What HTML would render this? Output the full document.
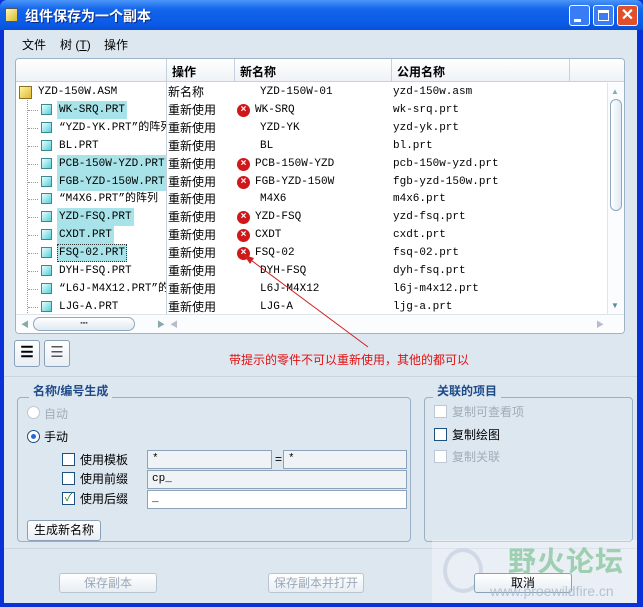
<!DOCTYPE html><html><head><meta charset="utf-8"><style>
*{margin:0;padding:0;box-sizing:border-box}
body{width:643px;height:607px;overflow:hidden;background:#0831d9;font:12px "Liberation Sans","Noto Sans CJK SC",sans-serif;position:relative}
.a{position:absolute}
.mono{font-family:"Liberation Mono","Noto Sans CJK SC",monospace;font-size:11px}
#title{left:0;top:0;width:643px;height:30px;background:linear-gradient(#4a96f8,#1466ec 30%,#0a5ae6 80%,#0a50d8);border-radius:7px 7px 0 0}
#body{left:4px;top:30px;width:633px;height:573px;background:#dde7f0}
.row{position:absolute;left:0;height:18px;line-height:18px;width:590px;white-space:nowrap}
.hl{background:#a7e3e8}
.ic{display:inline-block;width:11px;height:11px;background:linear-gradient(135deg,#e8ffff,#58cfd8);border:1px solid #3a8a90;vertical-align:-1px}
.x{position:absolute;left:221px;top:3px;width:13px;height:13px;border-radius:50%;background:#d0171a;color:#fff;font-size:10px;line-height:13px;text-align:center;font-weight:bold}
.btn{position:absolute;border:1px solid #8aa0b8;border-radius:3px;background:linear-gradient(#fff,#e8eef4);text-align:center;line-height:18px}
.dis{color:#9aa8b8;border-color:#b8c4d0}
.cb{position:absolute;width:13px;height:13px;border:1px solid #1c5180;background:#fff}
.inp{position:absolute;height:19px;border:1px solid #8ca3bb;background:#f0f3f6;line-height:17px;padding-left:4px;font-family:"Liberation Mono",monospace;font-size:11px}
</style></head><body>
<div id="title" class="a"></div>
<div class="a" style="left:5px;top:8px;width:13px;height:14px;background:linear-gradient(135deg,#fff8b0,#d8b830);border:1px solid #555"></div>
<div class="a" style="left:25px;top:6px;color:#fff;font-size:14px;font-weight:bold;text-shadow:1px 1px #0a2a8a">组件保存为一个副本</div>
<div class="a" style="left:569px;top:5px;width:21px;height:21px;border:1px solid #fff;border-radius:3px;background:#3a7cf4"><div class="a" style="left:4px;top:13px;width:7px;height:3px;background:#fff"></div></div>
<div class="a" style="left:593px;top:5px;width:21px;height:21px;border:1px solid #fff;border-radius:3px;background:#3a7cf4"><div class="a" style="left:4px;top:4px;width:11px;height:11px;border:1px solid #fff;border-top:3px solid #fff"></div></div>
<div class="a" style="left:617px;top:5px;width:21px;height:21px;border:1px solid #fff;border-radius:3px;background:#e0502a;color:#fff;font-weight:bold;font-size:16px;text-align:center;line-height:19px">✕</div>
<div id="body" class="a"></div>
<div class="a" style="left:22px;top:36px">文件</div>
<div class="a" style="left:60px;top:36px">树 (<u>T</u>)</div>
<div class="a" style="left:104px;top:36px">操作</div>
<div class="a" style="left:15px;top:58px;width:610px;height:276px;background:#fff;border:1px solid #9eb3c8;border-radius:4px;overflow:hidden">
 <div class="a" style="left:0;top:0;width:610px;height:23px;background:linear-gradient(#fff,#eef2f6);border-bottom:1px solid #c5d2de"></div>
 <div class="a" style="left:150px;top:0;width:1px;height:255px;background:#c5d2de"></div>
 <div class="a" style="left:218px;top:0;width:1px;height:23px;background:#c5d2de"></div>
 <div class="a" style="left:375px;top:0;width:1px;height:23px;background:#c5d2de"></div>
 <div class="a" style="left:553px;top:0;width:1px;height:23px;background:#c5d2de"></div>
 <div class="a" style="left:156px;top:4px;font-weight:bold">操作</div>
 <div class="a" style="left:224px;top:4px;font-weight:bold">新名称</div>
 <div class="a" style="left:381px;top:4px;font-weight:bold">公用名称</div>
 <div class="a" style="left:0;top:24px;width:590px;height:232px">
  <div class="a" style="left:11px;top:12px;width:1px;height:220px;border-left:1px dotted #999"></div>
  <div class="row mono" style="top:0"><span class="a" style="left:3px;top:3px;width:13px;height:13px;background:linear-gradient(135deg,#fff6a0,#e0b830);border:1px solid #8a7020"></span><span class="a" style="left:22px">YZD-150W.ASM</span><span class="a" style="left:152px;font-size:12px;font-family:'Noto Sans CJK SC',sans-serif">新名称</span><span class="a" style="left:244px">YZD-150W-01</span><span class="a" style="left:377px">yzd-150w.asm</span></div>
 </div>
 <div id="rows" class="a" style="left:0;top:24px;width:590px;height:232px"></div>
 <div class="a" style="left:591px;top:24px;width:18px;height:231px;background:#fafcfd;border-left:1px solid #dde4ea"></div>
 <div class="a" style="left:595px;top:28px;color:#8aa;font-size:8px">▲</div>
 <div class="a" style="left:594px;top:40px;width:12px;height:112px;border:1px solid #8fa8be;border-radius:6px;background:linear-gradient(90deg,#fff,#dfe9f2)"></div>
 <div class="a" style="left:595px;top:242px;color:#5a8a9a;font-size:8px">▼</div>
 <div class="a" style="left:0;top:255px;width:610px;height:21px;background:#fafcfd;border-top:1px solid #dde4ea"></div>
 <div class="a" style="left:5px;top:260px;color:#8aa;font-size:8px">◀</div>
 <div class="a" style="left:17px;top:258px;width:102px;height:14px;border:1px solid #8fa8be;border-radius:7px;background:linear-gradient(#fff,#dfe9f2);text-align:center;font-size:7px;line-height:12px;color:#556">▪▪▪</div>
 <div class="a" style="left:141px;top:260px;color:#8aa;font-size:8px">▶</div>
 <div class="a" style="left:154px;top:260px;color:#bbc;font-size:8px">◀</div>
 <div class="a" style="left:580px;top:260px;color:#bbc;font-size:8px">▶</div>
</div>
<div class="btn" style="left:14px;top:340px;width:26px;height:27px;line-height:24px;font-size:15px;font-weight:bold">☰</div>
<div class="btn" style="left:44px;top:340px;width:26px;height:27px;line-height:24px;font-size:15px;color:#555">☰</div>
<div class="a" style="left:229px;top:351px;color:#e01010;font-size:12px">带提示的零件不可以重新使用，其他的都可以</div>
<svg class="a" style="left:0;top:0" width="643" height="607"><line x1="244" y1="255" x2="368" y2="347" stroke="#d02020" stroke-width="1"/><polygon points="244,255 254,258 250,264" fill="#d02020"/></svg>
<div class="a" style="left:4px;top:376px;width:633px;height:1px;background:#c8d4e0"></div>
<div class="a" style="left:17px;top:397px;width:394px;height:145px;border:1px solid #9ab0c6;border-radius:4px"></div>
<div class="a" style="left:29px;top:382px;background:#dde7f0;padding:0 4px;font-weight:bold;color:#1e4a8a">名称/编号生成</div>
<div class="a" style="left:424px;top:397px;width:209px;height:145px;border:1px solid #9ab0c6;border-radius:4px"></div>
<div class="a" style="left:433px;top:382px;background:#dde7f0;padding:0 4px;font-weight:bold;color:#1e4a8a">关联的项目</div>
<div class="a" style="left:27px;top:406px;width:13px;height:13px;border-radius:50%;border:1px solid #bcc8d4;background:#fff"></div>
<div class="a" style="left:44px;top:405px;color:#a0acb8">自动</div>
<div class="a" style="left:27px;top:430px;width:13px;height:13px;border-radius:50%;border:1px solid #1c5180;background:#fff"><div class="a" style="left:3px;top:3px;width:5px;height:5px;border-radius:50%;background:#2a6ad0"></div></div>
<div class="a" style="left:44px;top:428px">手动</div>
<div class="cb" style="left:62px;top:453px"></div><div class="a" style="left:80px;top:451px">使用模板</div>
<div class="cb" style="left:62px;top:472px"></div><div class="a" style="left:80px;top:470px">使用前缀</div>
<div class="cb" style="left:62px;top:492px;font-size:11px;line-height:11px;text-align:center;color:#2a8a2a">✓</div><div class="a" style="left:80px;top:490px">使用后缀</div>
<div class="inp" style="left:147px;top:450px;width:125px">*</div>
<div class="a" style="left:275px;top:452px">=</div>
<div class="inp" style="left:283px;top:450px;width:124px">*</div>
<div class="inp" style="left:147px;top:470px;width:260px">cp_</div>
<div class="inp" style="left:147px;top:490px;width:260px;background:#fff">_</div>
<div class="btn" style="left:27px;top:520px;width:74px;height:21px">生成新名称</div>
<div class="cb" style="left:434px;top:405px;border-color:#bcc8d4"></div><div class="a" style="left:452px;top:403px;color:#a0acb8">复制可查看项</div>
<div class="cb" style="left:434px;top:428px"></div><div class="a" style="left:452px;top:426px">复制绘图</div>
<div class="cb" style="left:434px;top:450px;border-color:#bcc8d4"></div><div class="a" style="left:452px;top:448px;color:#a0acb8">复制关联</div>
<div class="a" style="left:4px;top:548px;width:633px;height:1px;background:#c8d4e0"></div>
<div class="btn dis" style="left:59px;top:573px;width:98px;height:20px">保存副本</div>
<div class="btn dis" style="left:268px;top:573px;width:96px;height:20px">保存副本并打开</div>
<div class="a" style="left:432px;top:540px;width:205px;height:63px;background:rgba(255,255,255,.35)"></div>
<div class="a" style="left:443px;top:548px;width:40px;height:45px;border:4px solid #c8d0e0;border-radius:50%;opacity:.7"></div>
<div class="btn" style="left:474px;top:573px;width:98px;height:20px">取消</div>
<div class="a" style="left:508px;top:540px;color:#8cc8a0;font-size:28px;font-weight:bold;opacity:.8;letter-spacing:1px">野火论坛</div>
<div class="a" style="left:490px;top:583px;color:#a8b8c8;font-size:14px;opacity:.8">www.proewildfire.cn</div>
<script>
var d=[["WK-SRQ.PRT",1,1,"WK-SRQ","wk-srq.prt"],["“YZD-YK.PRT”的阵列",0,0,"YZD-YK","yzd-yk.prt"],["BL.PRT",0,0,"BL","bl.prt"],["PCB-150W-YZD.PRT",1,1,"PCB-150W-YZD","pcb-150w-yzd.prt"],["FGB-YZD-150W.PRT",1,1,"FGB-YZD-150W","fgb-yzd-150w.prt"],["“M4X6.PRT”的阵列",0,0,"M4X6","m4x6.prt"],["YZD-FSQ.PRT",1,1,"YZD-FSQ","yzd-fsq.prt"],["CXDT.PRT",1,1,"CXDT","cxdt.prt"],["FSQ-02.PRT",2,1,"FSQ-02","fsq-02.prt"],["DYH-FSQ.PRT",0,0,"DYH-FSQ","dyh-fsq.prt"],["“L6J-M4X12.PRT”的阵列",0,0,"L6J-M4X12","l6j-m4x12.prt"],["LJG-A.PRT",0,0,"LJG-A","ljg-a.prt"]];
var h="";d.forEach(function(r,i){var t=(i+1)*17.9;
h+='<div class="row mono" style="top:'+t+'px"><span class="a" style="left:12px;top:9px;width:10px;border-top:1px dotted #999"></span><span class="ic a" style="left:25px;top:3px"></span><span class="a '+(r[1]==1?'hl':'')+'" style="left:41px;padding:0 2px;max-width:109px;overflow:hidden;'+(r[1]==2?'background:#a7e3e8;outline:1px dotted #333;outline-offset:-1px':'')+'">'+r[0]+'</span><span class="a" style="left:152px;font-size:12px;font-family:\'Noto Sans CJK SC\',sans-serif;background:#fff">重新使用</span>'+(r[2]?'<span class="x">×</span>':'')+'<span class="a" style="left:'+(r[2]?239:244)+'px">'+r[3]+'</span><span class="a" style="left:377px">'+r[4]+'</span></div>';});
document.getElementById("rows").innerHTML=h;
</script>
</body></html>
